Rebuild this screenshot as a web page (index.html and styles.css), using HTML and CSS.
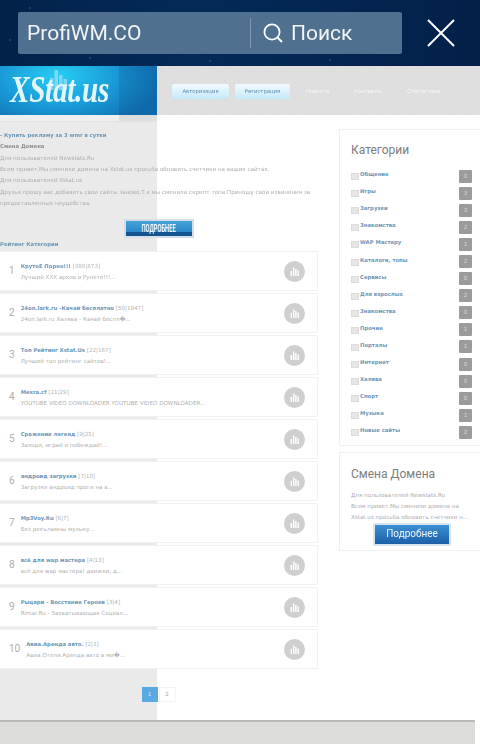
FILE: index.html
```html
<!DOCTYPE html>
<html lang="ru">
<head>
<meta charset="utf-8">
<title>XStat.us</title>
<link rel="stylesheet" href="styles.css">
</head>
<body>
<div class="topbar">
  <div class="search">
    <div class="search-input">ProfiWM.CO</div>
    <div class="search-btn">
      <svg class="search-icon" viewBox="0 0 20 20" width="20" height="20"><circle cx="9" cy="9" r="7.6" fill="none" stroke="#fff" stroke-width="1.8"/><path d="M14.5 14.5L19 19" stroke="#fff" stroke-width="1.8" fill="none"/></svg>
      <span>Поиск</span>
    </div>
  </div>
  <svg class="close" viewBox="0 0 28 28" width="28" height="28"><path d="M1 1L27 27M27 1L1 27" stroke="#fff" stroke-width="2" fill="none"/></svg>
</div>
<header class="site-head">
  <div class="logo">
    <svg class="logo-bars" viewBox="0 0 18 20" width="18" height="20"><rect x="0" y="8" width="3.5" height="12" fill="#8fdcf5"/><rect x="4.5" y="0" width="3.5" height="20" fill="#8fdcf5"/><rect x="9" y="5" width="3.5" height="15" fill="#8fdcf5"/><rect x="13.5" y="9" width="3.5" height="11" fill="#8fdcf5"/></svg>
    <span class="logo-text">XStat.us</span>
    <div class="logo-side"></div>
  </div>
  <nav class="nav">
    <a class="pill pill-a">Авторизация</a>
    <a class="pill pill-b">Регистрация</a>
    <a class="navlink nl-a">Новости</a>
    <a class="navlink nl-b">Контакты</a>
    <a class="navlink">Статистика</a>
  </nav>
</header>
<div class="main">
  <div class="strip"><div class="strip-side"></div></div>
  <div class="columns">
    <section class="left">
      <div class="news">
        <p class="ad">- Купить рекламу за 3 wmr в сутки</p>
        <p class="news-title">Смена Домена</p>
        <p>Для пользователей Newstats.Ru</p>
        <p>Всем привет.Мы сменили домена на Xstat.us просьба обновить счетчики на ваших сайтах.</p>
        <p>Для пользователей Xstat.us</p>
        <p>Друзья прошу вас добавить свои сайты заново.Т.к мы сменили скрипт топа.Приношу свои извинения за</p>
        <p>предоставленные неудобства.</p>
      </div>
      <div class="more-wrap"><a class="more"><span>ПОДРОБНЕЕ</span></a></div>
      <h3 class="rating-title">Рейтинг Категории</h3>
      <ol class="rows">
        <li class="row"><span class="num">1</span><div class="info"><div class="t"><a>КрутоЕ Порно!!!</a> [388|873]</div><div class="s">Лучший XXX архив в Рунете!!!...</div></div><svg class="chart" viewBox="0 0 21 21"><circle cx="10.5" cy="10.5" r="10.5" fill="#cfcfcf"/><path d="M6.5 15V10h1.6v5zM9 15V6.5h1.4V15zM11.2 15V8h1.4v7zM13.5 15v-5.5h1.4V15z" fill="#fff"/></svg></li>
        <li class="row"><span class="num">2</span><div class="info"><div class="t"><a>24on.lark.ru -Качай бесплатно</a> [50|1047]</div><div class="s">24on.lark.ru Халява - Качай беспл�...</div></div><svg class="chart" viewBox="0 0 21 21"><circle cx="10.5" cy="10.5" r="10.5" fill="#cfcfcf"/><path d="M6.5 15V10h1.6v5zM9 15V6.5h1.4V15zM11.2 15V8h1.4v7zM13.5 15v-5.5h1.4V15z" fill="#fff"/></svg></li>
        <li class="row"><span class="num">3</span><div class="info"><div class="t"><a>Топ Рейтинг Xstat.Us</a> [22|167]</div><div class="s">Лучший топ рейтинг сайтов!...</div></div><svg class="chart" viewBox="0 0 21 21"><circle cx="10.5" cy="10.5" r="10.5" fill="#cfcfcf"/><path d="M6.5 15V10h1.6v5zM9 15V6.5h1.4V15zM11.2 15V8h1.4v7zM13.5 15v-5.5h1.4V15z" fill="#fff"/></svg></li>
        <li class="row"><span class="num">4</span><div class="info"><div class="t"><a>Mexra.cf</a> [21|29]</div><div class="s">YOUTUBE VIDEO DOWNLOADER YOUTUBE VIDEO DOWNLOADER...</div></div><svg class="chart" viewBox="0 0 21 21"><circle cx="10.5" cy="10.5" r="10.5" fill="#cfcfcf"/><path d="M6.5 15V10h1.6v5zM9 15V6.5h1.4V15zM11.2 15V8h1.4v7zM13.5 15v-5.5h1.4V15z" fill="#fff"/></svg></li>
        <li class="row"><span class="num">5</span><div class="info"><div class="t"><a>Сражение легенд</a> [9|25]</div><div class="s">Заходи, играй и побеждай!...</div></div><svg class="chart" viewBox="0 0 21 21"><circle cx="10.5" cy="10.5" r="10.5" fill="#cfcfcf"/><path d="M6.5 15V10h1.6v5zM9 15V6.5h1.4V15zM11.2 15V8h1.4v7zM13.5 15v-5.5h1.4V15z" fill="#fff"/></svg></li>
        <li class="row"><span class="num">6</span><div class="info"><div class="t"><a>андроид загрузки</a> [7|10]</div><div class="s">Загрузки андроид проги на в...</div></div><svg class="chart" viewBox="0 0 21 21"><circle cx="10.5" cy="10.5" r="10.5" fill="#cfcfcf"/><path d="M6.5 15V10h1.6v5zM9 15V6.5h1.4V15zM11.2 15V8h1.4v7zM13.5 15v-5.5h1.4V15z" fill="#fff"/></svg></li>
        <li class="row"><span class="num">7</span><div class="info"><div class="t"><a>Mp3Voy.Ru</a> [6|7]</div><div class="s">Без рекъламны музыку...</div></div><svg class="chart" viewBox="0 0 21 21"><circle cx="10.5" cy="10.5" r="10.5" fill="#cfcfcf"/><path d="M6.5 15V10h1.6v5zM9 15V6.5h1.4V15zM11.2 15V8h1.4v7zM13.5 15v-5.5h1.4V15z" fill="#fff"/></svg></li>
        <li class="row"><span class="num">8</span><div class="info"><div class="t"><a>всё для wap мастера</a> [4|13]</div><div class="s">всё для wap мастера! движки, д...</div></div><svg class="chart" viewBox="0 0 21 21"><circle cx="10.5" cy="10.5" r="10.5" fill="#cfcfcf"/><path d="M6.5 15V10h1.6v5zM9 15V6.5h1.4V15zM11.2 15V8h1.4v7zM13.5 15v-5.5h1.4V15z" fill="#fff"/></svg></li>
        <li class="row"><span class="num">9</span><div class="info"><div class="t"><a>Рыцари - Восстание Героев</a> [3|4]</div><div class="s">Rimar.Ru - Захватывающая Социал...</div></div><svg class="chart" viewBox="0 0 21 21"><circle cx="10.5" cy="10.5" r="10.5" fill="#cfcfcf"/><path d="M6.5 15V10h1.6v5zM9 15V6.5h1.4V15zM11.2 15V8h1.4v7zM13.5 15v-5.5h1.4V15z" fill="#fff"/></svg></li>
        <li class="row"><span class="num">10</span><div class="info"><div class="t"><a>Авиа.Аренда авто.</a> [2|3]</div><div class="s">Авиа.Отели.Аренда авто в ми�...</div></div><svg class="chart" viewBox="0 0 21 21"><circle cx="10.5" cy="10.5" r="10.5" fill="#cfcfcf"/><path d="M6.5 15V10h1.6v5zM9 15V6.5h1.4V15zM11.2 15V8h1.4v7zM13.5 15v-5.5h1.4V15z" fill="#fff"/></svg></li>
      </ol>
      <div class="pager"><span class="page current">1</span><span class="page">2</span></div>
    </section>
    <aside class="right">
      <div class="box cats">
        <h2>Категории</h2>
        <ul class="cat-list">
          <li><i></i><a>Общение</a><b>0</b></li>
          <li><i></i><a>Игры</a><b>3</b></li>
          <li><i></i><a>Загрузки</a><b>3</b></li>
          <li><i></i><a>Знакомства</a><b>2</b></li>
          <li><i></i><a>WAP Мастеру</a><b>1</b></li>
          <li><i></i><a>Каталоги, топы</a><b>2</b></li>
          <li><i></i><a>Сервисы</a><b>0</b></li>
          <li><i></i><a>Для взрослых</a><b>2</b></li>
          <li><i></i><a>Знакомства</a><b>0</b></li>
          <li><i></i><a>Прочие</a><b>1</b></li>
          <li><i></i><a>Порталы</a><b>1</b></li>
          <li><i></i><a>Интернет</a><b>0</b></li>
          <li><i></i><a>Халява</a><b>0</b></li>
          <li><i></i><a>Спорт</a><b>0</b></li>
          <li><i></i><a>Музыка</a><b>1</b></li>
          <li><i></i><a>Новые сайты</a><b>2</b></li>
        </ul>
      </div>
      <div class="box domain">
        <h2>Смена Домена</h2>
        <p>Для пользователей Newstats.Ru</p>
        <p>Всем привет.Мы сменили домена на</p>
        <p>Xstat.us просьба обновить счетчики н...</p>
        <a class="btn">Подробнее</a>
      </div>
    </aside>
  </div>
</div>
<footer class="foot"></footer>
</body>
</html>
```
FILE: styles.css
```css
* { box-sizing: border-box; }
html, body { margin: 0; padding: 0; }
body {
  width: 480px;
  height: 744px;
  overflow: hidden;
  background: #fff;
  font-family: "DejaVu Sans", sans-serif;
  font-size: 5.6px;
  color: #adadad;
  filter: blur(.3px);
}
p, h2, h3, ol, ul { margin: 0; padding: 0; list-style: none; font-weight: normal; }

.topbar {
  height: 66px;
  padding: 12px 25px 0 18px;
  display: flex;
  align-items: flex-start;
  justify-content: space-between;
  background:
    radial-gradient(circle at 30px 8px, #5a7a9a 0, transparent 1px),
    radial-gradient(circle at 90px 58px, #6a8aaa 0, transparent 1px),
    radial-gradient(circle at 210px 61px, #6a8aaa 0, transparent 1px),
    radial-gradient(circle at 330px 60px, #5a7a9a 0, transparent 1px),
    radial-gradient(circle at 10px 40px, #5a7a9a 0, transparent 1px),
    linear-gradient(90deg, #03224a, #042a58 40%, #032049);
}
.search {
  width: 384px;
  height: 42px;
  display: flex;
  border-radius: 2px;
  background: #50708f;
  color: #fff;
  font-family: Roboto, sans-serif;
  font-size: 21px;
}
.search-input { width: 232px; padding: 0 0 0 9px; line-height: 42px; color: #f2f4f6; }
.search-btn {
  position: relative;
  flex: 1;
  display: flex;
  align-items: center;
  gap: 8px;
  padding-left: 13px;
  color: #f2f4f6;
}
.search-btn::before {
  content: "";
  position: absolute;
  left: 0;
  top: 6px;
  bottom: 6px;
  width: 1px;
  background: #7f98ae;
}
.search-icon { flex: none; }
.close { margin-top: 7px; flex: none; }

.site-head { height: 49px; display: flex; }
.logo {
  position: relative;
  width: 157px;
  overflow: hidden;
  background: radial-gradient(ellipse 105px 55px at 58px 10px, #27cdf3 0, #1a9ad7 55%, #1170b3 100%);
}
.logo-side {
  position: absolute;
  right: 0;
  top: 0;
  bottom: 0;
  width: 38px;
  background: rgba(5, 60, 120, .16);
}
.logo-bars { position: absolute; left: 50px; top: 4px; opacity: .85; }
.logo-text {
  position: absolute;
  left: 10px;
  top: 2px;
  font-family: "Liberation Serif", serif;
  font-weight: bold;
  font-style: italic;
  font-size: 37px;
  line-height: 44px;
  color: #e2f6fc;
  white-space: nowrap;
  letter-spacing: -.4px;
  transform: scaleX(.79);
  transform-origin: left center;
}
.nav {
  flex: 1;
  display: flex;
  align-items: flex-start;
  padding: 18px 0 0 15px;
  background: repeating-linear-gradient(45deg, #dcdcdc 0 1px, #e0e0e0 1px 3px);
  color: #fff;
  font-size: 5.3px;
}
.pill {
  height: 15px;
  line-height: 14px;
  text-align: center;
  border-radius: 2px;
  color: #5b86ad;
  background: linear-gradient(#f2fbff, #c4e8fb);
}
.pill-a { width: 57px; margin-right: 6px; }
.pill-b { width: 55px; margin-right: 16px; }
.navlink { color: #f7f7f7; line-height: 14px; }
.nl-a { margin-right: 25px; }
.nl-b { margin-right: 26px; }

.main {
  height: 605px;
  background: linear-gradient(90deg, #eaeaea 157px, #fff 157px);
}
.strip { height: 7px; width: 157px; background: #efefef; border-bottom: 1px solid #e2e2e2; }
.strip-side { width: 38px; height: 6px; margin-left: 119px; background: #dedede; }
.columns { display: flex; align-items: flex-start; }

.left { width: 318px; flex: none; padding-top: 8px; }
.news p { line-height: 11.33px; white-space: nowrap; }
.news .ad { color: #6a97b8; font-weight: bold; font-size: 5.3px; }
.news .news-title { color: #8f8f8f; font-weight: bold; font-size: 5.3px; }
.more-wrap { margin-top: 10px; display: flex; justify-content: center; }
.more {
  width: 70px;
  height: 19px;
  display: flex;
  align-items: center;
  justify-content: center;
  border: 2px solid #d5dee7;
  background: linear-gradient(#45a3d9 0, #2b87c6 75%, #14558f 76%);
  color: #f0f6fb;
  font-family: Roboto, sans-serif;
  font-size: 10px;
  font-weight: bold;
}
.more span { transform: scaleX(.58); white-space: nowrap; }
.rating-title { margin-top: 0; line-height: 12px; font-size: 5.3px; font-weight: bold; color: #6a97b8; }

.rows { margin-top: 1px; display: flex; flex-direction: column; gap: 2px; }
.row {
  height: 40px;
  display: flex;
  align-items: center;
  padding-left: 9px;
  background: #fff;
  border: 1px solid #f1f1f1;
  border-left-width: 0;
}
.num { font-family: Roboto, sans-serif; font-size: 10px; color: #adadad; margin: -2px 6px 0 0; }
.info { flex: 1; padding-top: 2px; }
.t { line-height: 11px; white-space: nowrap; color: #b4b4b4; }
.t a { color: #6a97b8; font-weight: bold; font-size: 5.3px; }
.s { line-height: 11px; white-space: nowrap; color: #b0b0b0; }
.chart { width: 21px; height: 21px; margin-right: 12px; flex: none; }

.pager { margin-top: 18px; display: flex; justify-content: center; gap: 1px; padding-right: 1px; }
.page {
  width: 17px;
  height: 15px;
  line-height: 13px;
  text-align: center;
  border: 1px solid #f4f4f4;
  background: #fff;
  color: #aaa;
}
.page.current { width: 16px; background: #5aa9e0; border-color: #5aa9e0; color: #d8ecf8; }

.right { width: 141px; margin: 7px 0 0 21px; flex: none; display: flex; flex-direction: column; gap: 6px; }
.box { background: #fff; border: 1px solid #efefef; border-right-width: 0; padding: 0 11px; }
.box h2 { font-family: Roboto, sans-serif; font-size: 12px; color: #7d7d7d; line-height: 14px; }
.cats { height: 317px; padding-top: 13px; }
.cat-list { margin-top: 10px; display: flex; flex-direction: column; }
.cat-list li { height: 17.1px; display: flex; align-items: center; }
.cat-list i {
  width: 8px;
  height: 7px;
  margin: 2px 1px 0 0;
  background: #e6e6e6;
  border: 1px solid #dcdcdc;
  flex: none;
}
.cat-list a { flex: 1; margin-top: -3px; color: #6a97b8; font-weight: bold; font-size: 5.3px; }
.cat-list b {
  width: 13px;
  height: 13px;
  margin: 1px -3px 0 0;
  border-radius: 1px;
  background: #9b9b9b;
  color: #d9d9d9;
  font-weight: normal;
  text-align: center;
  line-height: 13px;
}
.domain { height: 99px; padding-top: 14px; position: relative; }
.domain h2 { margin-bottom: 9px; }
.domain p { line-height: 11px; white-space: nowrap; }
.btn {
  position: absolute;
  left: 33px;
  top: 70px;
  width: 78px;
  height: 23px;
  border: 2px solid #d7e3ee;
  border-radius: 2px;
  background: linear-gradient(#3d8fd4, #1b5fa8);
  color: #eef5fb;
  font-family: Roboto, sans-serif;
  font-size: 10px;
  line-height: 18px;
  text-align: center;
}
.foot { width: 475px; height: 24px; background: #dcdcdb; border-top: 2px solid #b9b9b7; }
```
